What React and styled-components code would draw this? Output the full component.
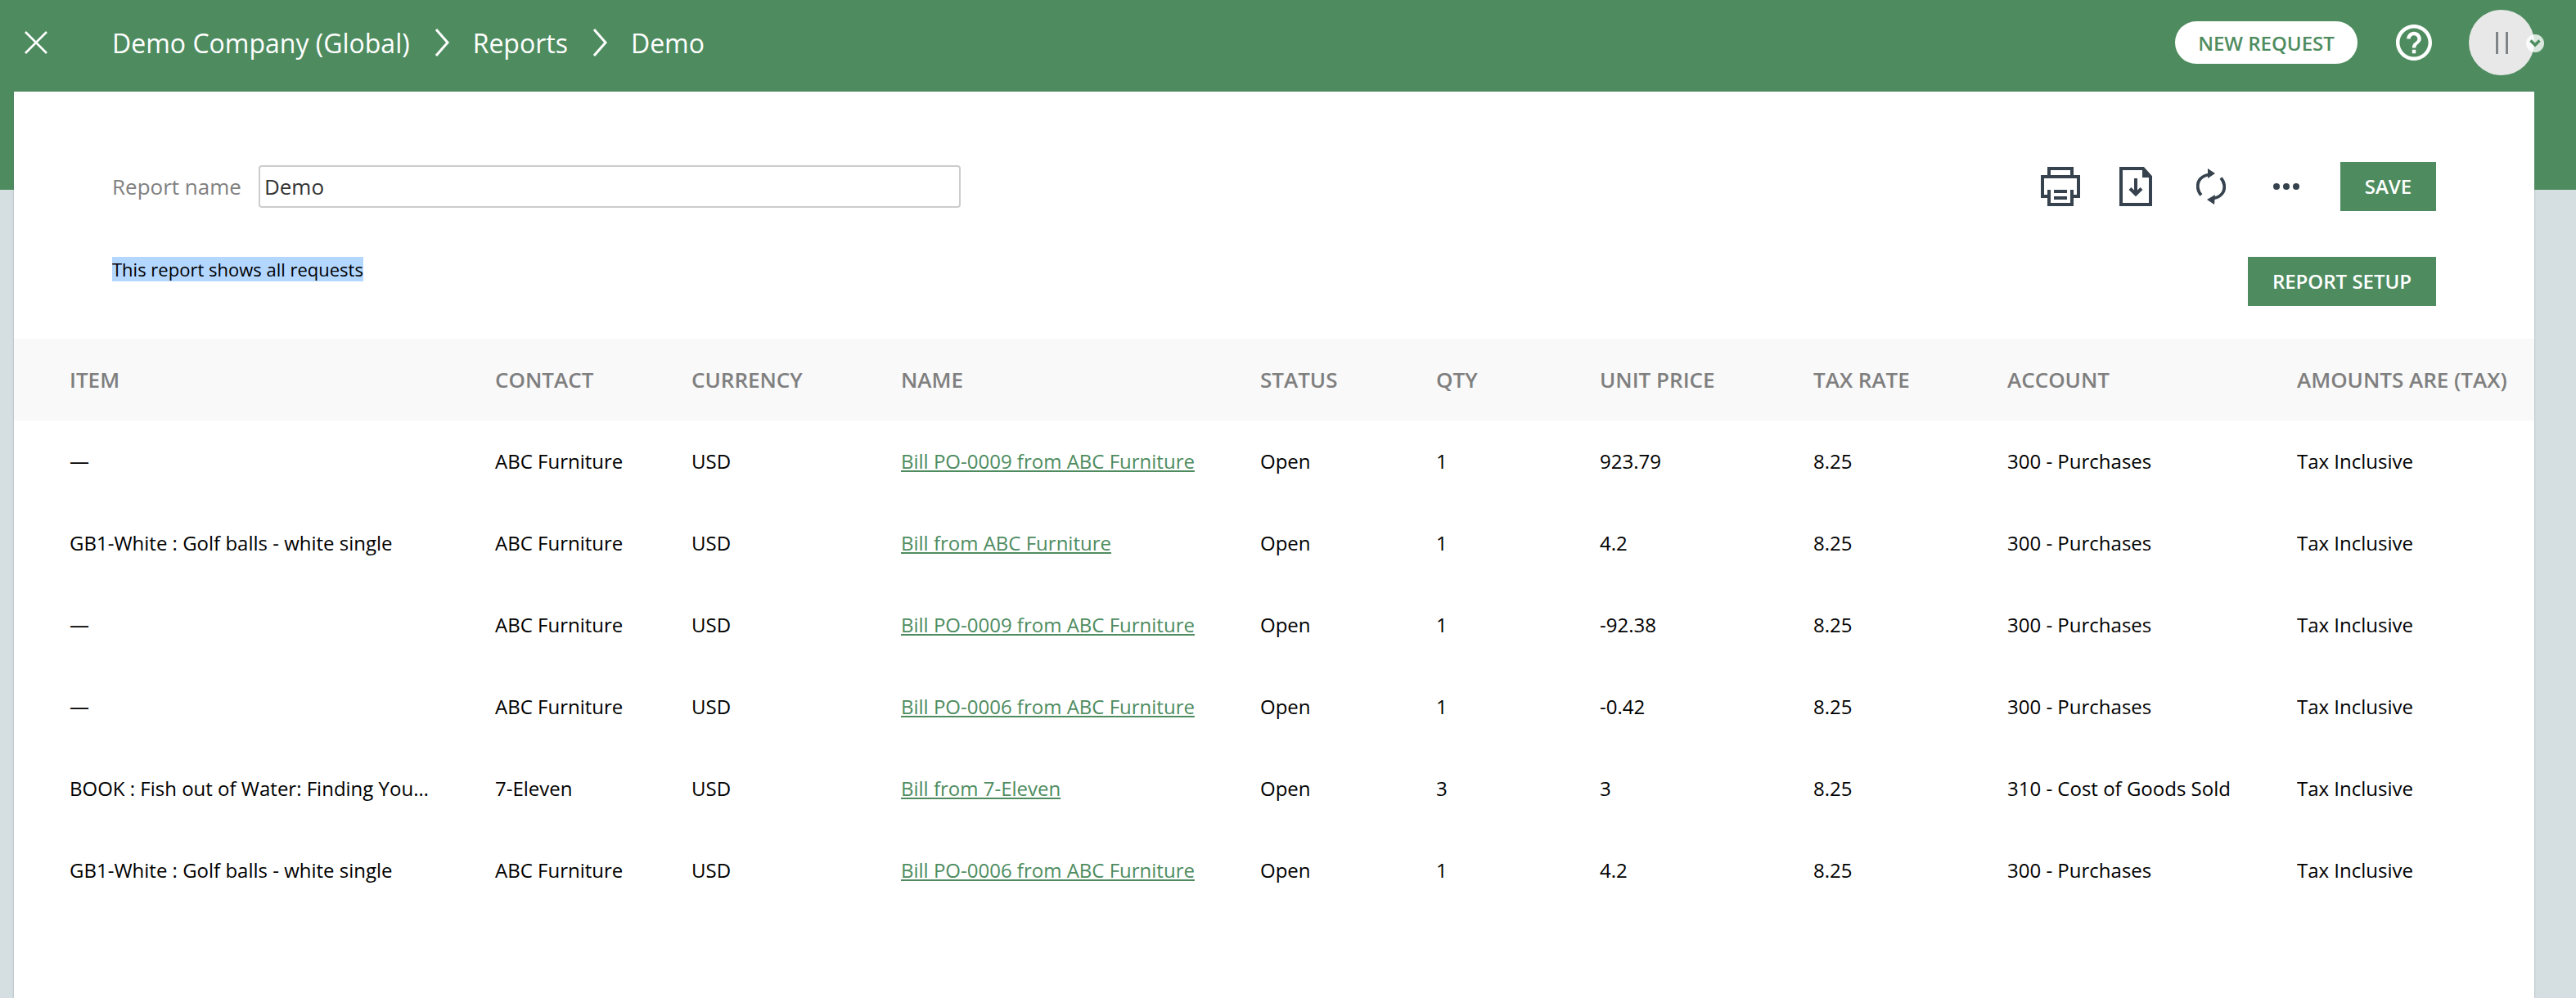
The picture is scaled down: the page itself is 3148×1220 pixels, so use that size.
import React from 'react'
import styled, { createGlobalStyle } from 'styled-components'

const GlobalStyle = createGlobalStyle`
    html, body { margin: 0; padding: 0; }
    body {
        width: 3148px;
        height: 1220px;
        overflow: hidden;
        background: #d5dee1;
        font-family: "Open Sans", sans-serif;
    }
`

const GREEN = '#4e8c5f'
const INK = '#36424e'

const Page = styled.div`
    position: relative;
    width: 3148px;
    height: 1220px;
`
const GreenBand = styled.div`
    height: 232px;
    background: ${GREEN};
    box-sizing: border-box;
`
const TopBar = styled.header`
    height: 104px;
    display: flex;
    align-items: center;
    color: #fff;
    box-sizing: border-box;
    padding-right: 51px;
`
const CloseButton = styled.div`
    width: 137px;
    padding-left: 30px;
    box-sizing: border-box;
    display: flex;
    align-items: center;
`
const Crumbs = styled.nav`
    display: flex;
    align-items: center;
    flex: 1;
    font-size: 32px;
`
const Chevron = styled.svg`
    width: 18px;
    height: 36px;
    margin: 0 29px 0 30px;
`
const NewRequest = styled.button`
    width: 223px;
    height: 52px;
    border: none;
    border-radius: 26px;
    background: #fff;
    color: ${GREEN};
    font: 600 24px "Open Sans", sans-serif;
    padding: 0;
    margin-right: 47px;
`
const Avatar = styled.div`
    position: relative;
    width: 80px;
    height: 80px;
    margin-left: 45px;
    border-radius: 50%;
    background: #e8e8e8;
    display: flex;
    align-items: center;
    justify-content: center;
    gap: 9px;
`
const AvatarBar = styled.span`
    width: 3px;
    height: 27px;
    background: #7f8489;
`
const AvatarCaret = styled.span`
    position: absolute;
    right: -12px;
    top: 30px;
    width: 22px;
    height: 22px;
    border-radius: 50%;
    background: rgba(255, 255, 255, 0.8);
    display: flex;
    align-items: center;
    justify-content: center;
`
const Panel = styled.main`
    position: absolute;
    top: 112px;
    left: 17px;
    width: 3080px;
    height: 1108px;
    background: #fff;
    box-shadow: 0 0 2px rgba(90, 110, 120, 0.5);
`
const PanelHead = styled.section`
    height: 302px;
    box-sizing: border-box;
    padding: 86px 120px 0 120px;
    display: flex;
    justify-content: space-between;
`
const LeftHead = styled.div`
    display: flex;
    flex-direction: column;
`
const NameRow = styled.label`
    display: flex;
    align-items: center;
    height: 60px;
    gap: 21px;
    font-size: 26px;
    color: #808080;
`
const NameInput = styled.input`
    width: 858px;
    height: 52px;
    box-sizing: border-box;
    border: 2px solid #cccccc;
    border-radius: 4px;
    padding: 0 5px;
    color: #333;
    font: 26px "Open Sans", sans-serif;
`
const Description = styled.p`
    margin: 56px 0 0;
    font-size: 22px;
    line-height: 30px;
    color: #000;
`
const Highlight = styled.span`
    background: #b3d7ff;
`
const RightHead = styled.div`
    display: flex;
    flex-direction: column;
    align-items: flex-end;
    gap: 56px;
`
const Tools = styled.div`
    display: flex;
    align-items: center;
    height: 60px;
`
const ToolIcon = styled.svg`
    display: block;
    flex: none;
    margin-right: ${p => p.$gap}px;
`
const GreenButton = styled.button`
    height: 60px;
    width: ${p => p.$w}px;
    border: none;
    padding: 0 0 2px;
    background: ${GREEN};
    color: #fff;
    font: 600 24px "Open Sans", sans-serif;
`
const Row = styled.div`
    display: grid;
    grid-template-columns: 520px 240px 256px 439px 215px 200px 261px 237px 354px 1fr;
    align-items: center;
    box-sizing: border-box;
    padding-left: 68px;
    padding-bottom: ${p => (p.$head ? 0 : 2)}px;
    height: 100px;
    background: ${p => (p.$head ? '#f9f9f9' : '#fff')};
    color: ${p => (p.$head ? '#7f7f7f' : '#000')};
    font-size: ${p => (p.$head ? 26 : 24)}px;
    font-weight: ${p => (p.$head ? 600 : 400)};
`
const Cell = styled.div`
    white-space: nowrap;
    overflow: hidden;
    text-overflow: ellipsis;
    padding-right: ${p => p.$pad || 0}px;
`
const BillLink = styled.a`
    color: ${GREEN};
    text-decoration: underline;
`

const columns = ['ITEM', 'CONTACT', 'CURRENCY', 'NAME', 'STATUS', 'QTY', 'UNIT PRICE', 'TAX RATE', 'ACCOUNT', 'AMOUNTS ARE (TAX)']

const rows = [
    ['—', 'ABC Furniture', 'Bill PO-0009 from ABC Furniture', '1', '923.79', '300 - Purchases'],
    ['GB1-White : Golf balls - white single', 'ABC Furniture', 'Bill from ABC Furniture', '1', '4.2', '300 - Purchases'],
    ['—', 'ABC Furniture', 'Bill PO-0009 from ABC Furniture', '1', '-92.38', '300 - Purchases'],
    ['—', 'ABC Furniture', 'Bill PO-0006 from ABC Furniture', '1', '-0.42', '300 - Purchases'],
    ['BOOK : Fish out of Water: Finding Your Brand', '7-Eleven', 'Bill from 7-Eleven', '3', '3', '310 - Cost of Goods Sold'],
    ['GB1-White : Golf balls - white single', 'ABC Furniture', 'Bill PO-0006 from ABC Furniture', '1', '4.2', '300 - Purchases'],
]

const App = () => {
    return (
        <Page>
            <GlobalStyle />
            <GreenBand>
                <TopBar>
                    <CloseButton>
                        <svg width="28" height="28" viewBox="0 0 28 28" fill="none" stroke="#fff" strokeWidth="2.600">
                            <path d="M1 1l26 26M27 1L1 27" />
                        </svg>
                    </CloseButton>
                    <Crumbs>
                        <span>Demo Company (Global)</span>
                        <Chevron viewBox="0 0 18 36" fill="none" stroke="#fff" strokeWidth="3"><path d="M2 2l14 16L2 34" /></Chevron>
                        <span>Reports</span>
                        <Chevron viewBox="0 0 18 36" fill="none" stroke="#fff" strokeWidth="3"><path d="M2 2l14 16L2 34" /></Chevron>
                        <span>Demo</span>
                    </Crumbs>
                    <NewRequest>NEW REQUEST</NewRequest>
                    <svg width="44" height="44" viewBox="2 2 20 20" fill="#fff">
                        <path d="M11 18h2v-2h-2v2zm1-16C6.480 2 2 6.480 2 12s4.480 10 10 10 10-4.480 10-10S17.520 2 12 2zm0 18c-4.410 0-8-3.590-8-8s3.590-8 8-8 8 3.590 8 8-3.590 8-8 8zm0-14c-2.210 0-4 1.790-4 4h2c0-1.100.9-2 2-2s2 .9 2 2c0 2-3 1.750-3 5h2c0-2.250 3-2.500 3-5 0-2.210-1.790-4-4-4z" />
                    </svg>
                    <Avatar>
                        <AvatarBar />
                        <AvatarBar />
                        <AvatarCaret>
                            <svg width="14" height="10" viewBox="0 0 14 10" fill="none" stroke={GREEN} strokeWidth="3.500"><path d="M1.500 1.500L7 7l5.500-5.500" /></svg>
                        </AvatarCaret>
                    </Avatar>
                </TopBar>
            </GreenBand>
            <Panel>
                <PanelHead>
                    <LeftHead>
                        <NameRow>
                            Report name
                            <NameInput defaultValue="Demo" />
                        </NameRow>
                        <Description><Highlight>This report shows all requests</Highlight></Description>
                    </LeftHead>
                    <RightHead>
                        <Tools>
                            <ToolIcon $gap={48} width="48" height="48" viewBox="0 0 48 48" fill="none" stroke={INK} strokeWidth="4">
                                <path d="M8 36H2V12H46V36H40" />
                                <path d="M10 12V2H38V12" />
                                <path d="M10 28V46H38V28" />
                                <path d="M16 30H32M16 38H32" />
                            </ToolIcon>
                            <ToolIcon $gap={54} width="40" height="48" viewBox="0 0 40 48" fill="none" stroke={INK} strokeWidth="4">
                                <path d="M2 2H29L38 12V46H2Z" />
                                <path d="M28 3L38 13H28Z" fill={INK} stroke="none" />
                                <path d="M20 14V33" />
                                <path d="M13 26.500L20 33.500L27 26.500" />
                            </ToolIcon>
                            <ToolIcon $gap={58} width="36" height="44" viewBox="0 0 36 44" fill="none" stroke={INK} strokeWidth="3.800">
                                <path d="M6 32.500C1 27 1 20 3 15.500C5 11.500 10 8.500 15 7.500" />
                                <path d="M30 11.500C35 17 35 24 33 28.500C31 32.500 26 35.500 21 36.500" />
                                <path d="M14 0L23 6L14 12ZM23 32L13 38L22 44Z" fill={INK} stroke="none" />
                            </ToolIcon>
                            <ToolIcon $gap={50} width="32" height="8" viewBox="0 0 32 8" fill={INK}>
                                <circle cx="4" cy="4" r="4" />
                                <circle cx="16" cy="4" r="4" />
                                <circle cx="28" cy="4" r="4" />
                            </ToolIcon>
                            <GreenButton $w={117}>SAVE</GreenButton>
                        </Tools>
                        <GreenButton $w={230}>REPORT SETUP</GreenButton>
                    </RightHead>
                </PanelHead>
                <Row $head>
                    {columns.map(c => <Cell key={c}>{c}</Cell>)}
                </Row>
                {rows.map((r, i) => (
                    <Row key={i}>
                        <Cell $pad={75}>{r[0]}</Cell>
                        <Cell>{r[1]}</Cell>
                        <Cell>USD</Cell>
                        <Cell><BillLink href="#">{r[2]}</BillLink></Cell>
                        <Cell>Open</Cell>
                        <Cell>{r[3]}</Cell>
                        <Cell>{r[4]}</Cell>
                        <Cell>8.25</Cell>
                        <Cell>{r[5]}</Cell>
                        <Cell>Tax Inclusive</Cell>
                    </Row>
                ))}
            </Panel>
        </Page>
    )
}

export default App
